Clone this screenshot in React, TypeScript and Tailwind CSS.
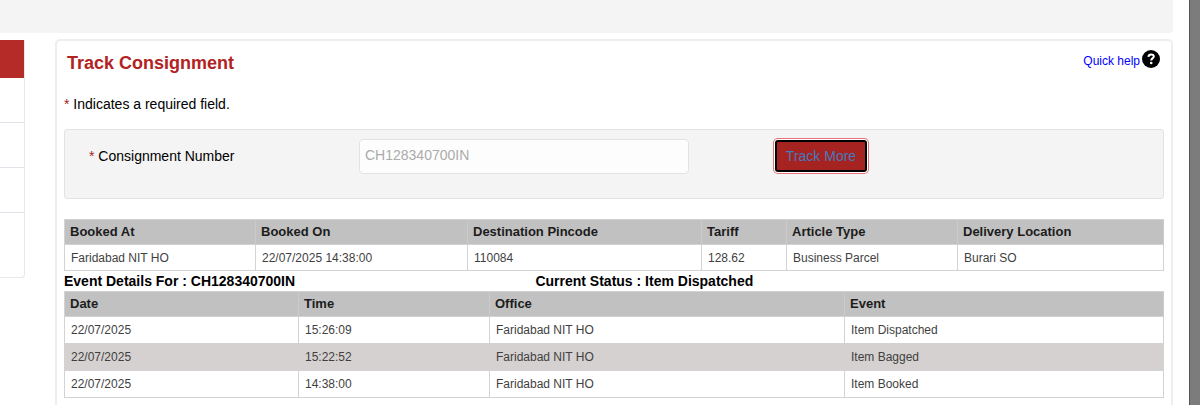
import { clsx } from "clsx";

type TableProps = {
  columns: { label: string; width: string }[];
  rows: string[][];
  cellHeight: string;
};

const consignmentNumber = "CH128340700IN";

const bookingColumns = [
  { label: "Booked At", width: "w-[191px]" },
  { label: "Booked On", width: "w-[212px]" },
  { label: "Destination Pincode", width: "w-[234px]" },
  { label: "Tariff", width: "w-[85px]" },
  { label: "Article Type", width: "w-[171px]" },
  { label: "Delivery Location", width: "w-[206px]" },
];

const bookingRows = [
  ["Faridabad NIT HO", "22/07/2025 14:38:00", "110084", "128.62", "Business Parcel", "Burari SO"],
];

const eventColumns = [
  { label: "Date", width: "w-[234px]" },
  { label: "Time", width: "w-[191px]" },
  { label: "Office", width: "w-[355px]" },
  { label: "Event", width: "w-[319px]" },
];

const eventRows = [
  ["22/07/2025", "15:26:09", "Faridabad NIT HO", "Item Dispatched"],
  ["22/07/2025", "15:22:52", "Faridabad NIT HO", "Item Bagged"],
  ["22/07/2025", "14:38:00", "Faridabad NIT HO", "Item Booked"],
];

function DataTable({ columns, rows, cellHeight }: TableProps) {
  return (
    <table className="w-full table-fixed border-collapse border border-[#d3d3d3] text-left">
      <thead>
        <tr className="h-[25px] bg-[#c1c1c1]">
          {columns.map((column) => (
            <th
              key={column.label}
              className={clsx("border-r border-[#cbcbcb] px-[5px] text-[13px] leading-4 font-bold text-[#1c1c1c]", column.width)}
            >
              {column.label}
            </th>
          ))}
        </tr>
      </thead>
      <tbody>
        {rows.map((row, index) => (
          <tr key={index} className={clsx("border border-[#d3d3d3]", cellHeight, index % 2 === 1 && "bg-[#d5d1d0]")}>
            {row.map((cell, i) => (
              <td key={i} className="border-r border-[#d3d3d3] px-[6px] text-[12px] leading-4 text-[#3f3f3f]">
                {cell}
              </td>
            ))}
          </tr>
        ))}
      </tbody>
    </table>
  );
}

export default function App() {
  return (
    <div className="flex min-h-screen bg-white font-['Liberation_Sans',Arial,sans-serif] text-[14px] text-black">
      <div className="flex min-w-0 flex-1 flex-col pr-4">
        <header className="h-[33px] rounded-br bg-[#f4f4f4]" />

        <div className="flex flex-1 pt-[6px]">
          {/* Sidebar menu */}
          <aside className="mt-px mr-[30px] w-[25px] shrink-0 self-start rounded-br border-r border-b border-[#e8e8ec]">
            <div className="h-[38px] bg-[#b52b27]" />
            <div className="h-[45px] border-b border-[#e2e2ea]" />
            <div className="h-[45px] border-b border-[#e2e2ea]" />
            <div className="h-[45px] border-b border-[#e2e2ea]" />
            <div className="h-16" />
          </aside>

          <main className="min-w-0 flex-1 rounded-t-[5px] border-2 border-b-0 border-[#eeeeee] px-[7px]">
            <div className="flex items-start justify-between pt-[6px] pr-1 pl-[3px]">
              <h1 className="pt-1 text-[18px] leading-6 font-bold text-[#b22222]">Track Consignment</h1>
              <a href="#help" className="flex items-center gap-[2px] text-[12px] leading-5 text-[#0000ff]">
                <span className="pt-1">Quick help</span>
                <svg viewBox="0 0 18 18" className="h-[18px] w-[18px]" aria-hidden="true">
                  <circle cx="9" cy="9" r="9" fill="#000" />
                  <path d="M6.4 6.8C6.6 5.1 7.7 4.4 9.1 4.4c1.6 0 2.7.8 2.7 2.2 0 1.8-2.6 1.8-2.6 3.8" fill="none" stroke="#fff" strokeWidth="2" />
                  <circle cx="9.2" cy="13" r="1.3" fill="#fff" />
                </svg>
              </a>
            </div>

            <p className="mt-[19px] leading-5">
              <span className="text-[#a52422]">*</span> Indicates a required field.
            </p>

            <form
              className="mt-[15px] flex h-[70px] items-start rounded-[3px] border border-[#e3e3e3] bg-[#f4f4f4] pt-[9px] pl-6"
              onSubmit={(e) => e.preventDefault()}
            >
              <label htmlFor="consignment" className="w-[270px] pt-[7px] leading-5">
                <span className="text-[#a52422]">*</span> Consignment Number
              </label>
              <input
                id="consignment"
                type="text"
                disabled
                defaultValue={consignmentNumber}
                className="h-[35px] w-[330px] rounded border border-[#e3e3e3] bg-[#fdfdfd] px-[5px] pb-[3px] text-[14px] text-[#ababab]"
              />
              <button
                type="submit"
                className="mt-px ml-[86px] h-8 w-[92px] rounded-[3px] border-2 border-black bg-[#a52422] text-[14px] text-[#4479bd] ring-1 ring-[#e57373] ring-offset-1"
              >
                Track More
              </button>
            </form>

            <section className="mt-5">
              <DataTable columns={bookingColumns} rows={bookingRows} cellHeight="h-[26px]" />
              <div className="flex leading-5 font-bold">
                <h2 className="w-3/7">Event Details For : {consignmentNumber}</h2>
                <h2>Current Status : Item Dispatched</h2>
              </div>
              <DataTable columns={eventColumns} rows={eventRows} cellHeight="h-[27px]" />
            </section>
          </main>
        </div>
      </div>

      {/* Window edge */}
      <div className="w-[11px] shrink-0 border-l border-[#555555] bg-[#7c7c7c]" />
    </div>
  );
}
